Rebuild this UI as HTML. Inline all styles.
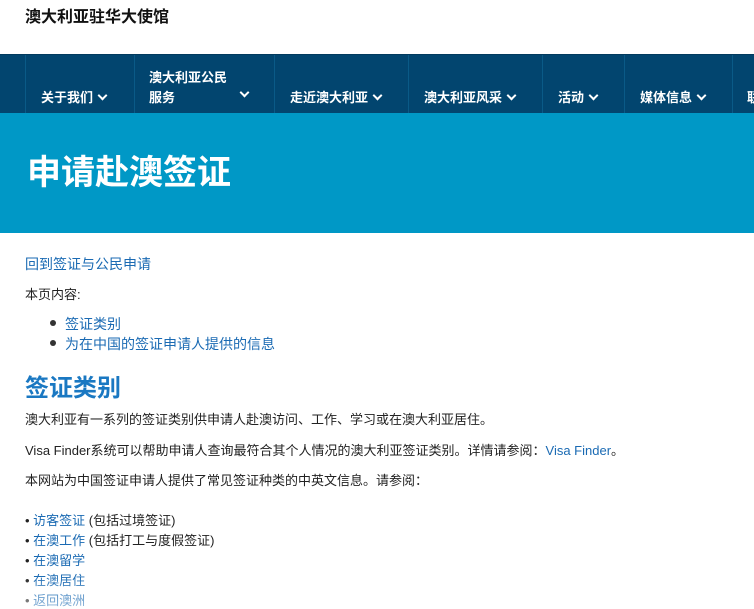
<!DOCTYPE html>
<html><head><meta charset="utf-8"><style>
body{margin:0;width:754px;height:608px;overflow:hidden;background:#fff;font-family:"Liberation Sans","Noto Sans CJK SC",sans-serif;position:relative}
.t{position:absolute;white-space:nowrap}
.nav{position:absolute;top:54px;left:0;width:754px;height:59px;background:#02456f;border-top:1px solid #023a5e;box-sizing:border-box}
.sep{position:absolute;top:0;width:1px;height:59px;background:#0a5a87}
.ni{position:absolute;color:#fff;font-weight:bold;font-size:13px;white-space:nowrap}
.ch{display:inline-block;width:5px;height:5px;border-right:2px solid #fff;border-bottom:2px solid #fff;transform:rotate(45deg);margin-left:6px;position:relative;top:-3px}
.ban{position:absolute;top:113px;left:0;width:754px;height:120px;background:#0098c6}
a{color:#1a6ab3;text-decoration:none}
.p{font-size:13px;color:#222}
.dot{position:absolute;width:6px;height:6px;border-radius:3px;background:#333}
.fade{position:absolute;left:0;top:575px;width:754px;height:33px;background:linear-gradient(rgba(255,255,255,0),rgba(255,255,255,.5))}
</style></head><body>
<div class="t" style="left:25px;top:3px;font-size:16px;font-weight:bold;color:#111">澳大利亚驻华大使馆</div>
<div class="nav">
<div class="sep" style="left:25px"></div><div class="sep" style="left:134px"></div><div class="sep" style="left:274px"></div><div class="sep" style="left:408px"></div><div class="sep" style="left:542px"></div><div class="sep" style="left:624px"></div><div class="sep" style="left:732px"></div>
<div class="ni" style="left:41px;top:32px">关于我们<span class="ch"></span></div>
<div class="ni" style="left:149px;top:12px">澳大利亚公民</div>
<div class="ni" style="left:149px;top:32px">服务</div><div class="ni" style="left:235px;top:32px"><span class="ch"></span></div>
<div class="ni" style="left:290px;top:32px">走近澳大利亚<span class="ch"></span></div>
<div class="ni" style="left:424px;top:32px">澳大利亚风采<span class="ch"></span></div>
<div class="ni" style="left:558px;top:32px">活动<span class="ch"></span></div>
<div class="ni" style="left:640px;top:32px">媒体信息<span class="ch"></span></div>
<div class="ni" style="left:747px;top:32px">联</div>
</div>
<div class="ban"><div class="t" style="left:27px;top:32px;font-size:34px;font-weight:bold;color:#fff">申请赴澳签证</div></div>
<div class="t" style="left:25px;top:254px;font-size:14px"><a>回到签证与公民申请</a></div>
<div class="t p" style="left:25px;top:284px">本页内容:</div>
<div class="dot" style="left:50px;top:320px"></div><div class="t" style="left:65px;top:314px;font-size:14px"><a>签证类别</a></div>
<div class="dot" style="left:50px;top:340px"></div><div class="t" style="left:65px;top:334px;font-size:14px"><a>为在中国的签证申请人提供的信息</a></div>
<div class="t" style="left:25px;top:368px;font-size:24px;font-weight:bold;color:#1a78c2">签证类别</div>
<div class="t p" style="left:25px;top:409px">澳大利亚有一系列的签证类别供申请人赴澳访问、工作、学习或在澳大利亚居住。</div>
<div class="t p" style="left:25px;top:440px">Visa Finder系统可以帮助申请人查询最符合其个人情况的澳大利亚签证类别。详情请参阅：<a>Visa Finder</a>。</div>
<div class="t p" style="left:25px;top:470px">本网站为中国签证申请人提供了常见签证种类的中英文信息。请参阅：</div>
<div class="t p" style="left:25px;top:510px">• <a>访客签证</a> (包括过境签证)</div>
<div class="t p" style="left:25px;top:530px">• <a>在澳工作</a> (包括打工与度假签证)</div>
<div class="t p" style="left:25px;top:550px">• <a>在澳留学</a></div>
<div class="t p" style="left:25px;top:570px">• <a>在澳居住</a></div>
<div class="t p" style="left:25px;top:590px">• <a>返回澳洲</a></div>
<div class="fade"></div>
</body></html>
